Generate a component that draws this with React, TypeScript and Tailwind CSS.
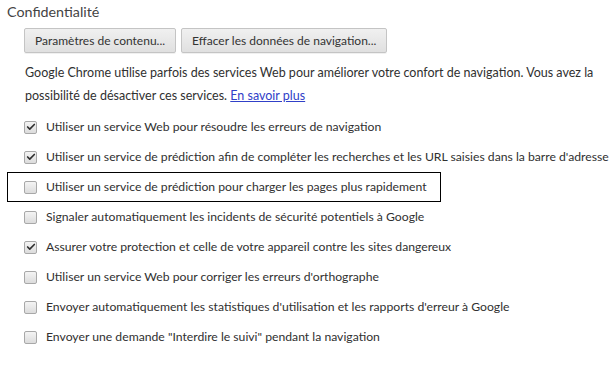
import { Check } from "lucide-react";

const options = [
  { label: "Utiliser un service Web pour résoudre les erreurs de navigation", checked: true },
  { label: "Utiliser un service de prédiction afin de compléter les recherches et les URL saisies dans la barre d'adresse", checked: true },
  { label: "Utiliser un service de prédiction pour charger les pages plus rapidement", checked: false, focused: true },
  { label: "Signaler automatiquement les incidents de sécurité potentiels à Google", checked: false },
  { label: "Assurer votre protection et celle de votre appareil contre les sites dangereux", checked: true },
  { label: "Utiliser un service Web pour corriger les erreurs d'orthographe", checked: false },
  { label: "Envoyer automatiquement les statistiques d'utilisation et les rapports d'erreur à Google", checked: false },
  { label: "Envoyer une demande \"Interdire le suivi\" pendant la navigation", checked: false },
];

const Checkbox = ({ checked }: { checked: boolean }) => (
  <span className="flex h-[13px] w-[13px] shrink-0 items-center justify-center rounded-[2px] border border-[#a8a8a8] bg-gradient-to-b from-[#f4f4f4] to-[#dcdcdc]">
    {checked && <Check className="h-[10px] w-[10px] text-[#303030]" strokeWidth={4} />}
  </span>
);

const Button = ({ children }: { children: string }) => (
  <button className="h-[25px] rounded-[2px] border border-[#c4c4c4] bg-gradient-to-b from-[#f0f0f0] to-[#e0e0e0] px-[10px] text-[12px] text-[#333] shadow-[0_1px_0_rgba(0,0,0,0.06)]">
    {children}
  </button>
);

export default function App() {
  return (
    <div className="h-[367px] w-[612px] overflow-hidden bg-white font-['Lato',sans-serif] text-[12.5px] text-[#303030]">
      <h2 className="pl-[7px] pt-[3px] text-[14.3px] leading-[18px] text-[#444]">Confidentialité</h2>
      <div className="mt-[7px] flex gap-[5px] pl-6">
        <Button>Paramètres de contenu...</Button>
        <Button>Effacer les données de navigation...</Button>
      </div>
      <p className="mt-[8px] pl-[25px] pr-2 leading-[23px]">
        Google Chrome utilise parfois des services Web pour améliorer votre confort de navigation. Vous avez la
        possibilité de désactiver ces services.{" "}
        <a href="#" className="text-[#3040c8] underline">
          En savoir plus
        </a>
      </p>
      <div className="mt-[5px] flex flex-col text-[12.2px]">
        {options.map((o) => (
          <div
            key={o.label}
            className={`ml-[7px] flex h-[30px] items-center gap-[9px] border pl-4 ${
              o.focused ? "w-[434px] border-black" : "border-transparent"
            }`}
          >
            <Checkbox checked={o.checked} />
            <span className="whitespace-nowrap">{o.label}</span>
          </div>
        ))}
      </div>
    </div>
  );
}
